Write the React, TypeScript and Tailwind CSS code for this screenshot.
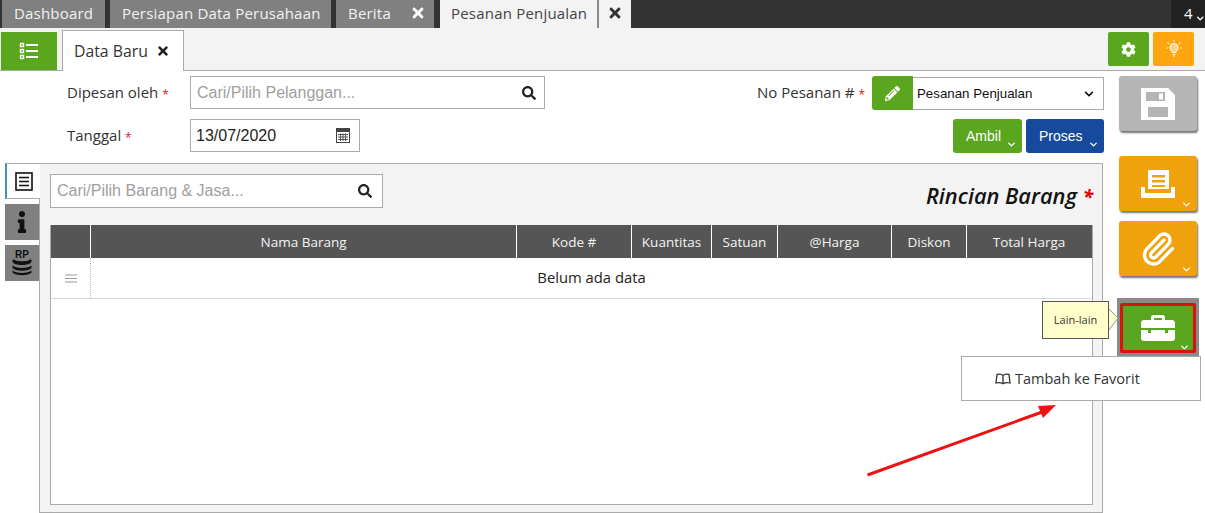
import React from "react";
import { FaTimes, FaSearch, FaCog, FaPencilAlt, FaInfo, FaChevronDown } from "react-icons/fa";
import { FiChevronDown } from "react-icons/fi";
import { Paperclip } from "lucide-react";

const ui = { fontFamily: '"Open Sans","Noto Sans",sans-serif' };
const arial = { fontFamily: '"Liberation Sans",Arial,sans-serif' };

function Chevron({ className = "" }: { className?: string }) {
  return <FiChevronDown className={className} strokeWidth={3} />;
}

function Star() {
  return <span className="align-[-1px] text-[12px] text-[#e02020]">*</span>;
}

function TopTab({ label, width, close }: { label: string; width: string; close?: boolean }) {
  return (
    <div className={`flex h-full items-center bg-[#808080] pb-[2px] text-[15px] tracking-[0.2px] text-[#f2f2f2] ${width}`}>
      <span className="pl-[12px]">{label}</span>
      {close && <FaTimes className="mr-[8px] ml-auto text-[16px] text-white" />}
    </div>
  );
}

function ListIcon() {
  return (
    <svg width="20" height="18" viewBox="0 0 20 18" fill="none" stroke="#fff">
      <rect x="1.5" y="1.5" width="3" height="3" strokeWidth="1.4" />
      <rect x="1.5" y="7.5" width="3" height="3" strokeWidth="1.4" />
      <rect x="1.5" y="13.5" width="3" height="3" strokeWidth="1.4" />
      <path d="M7 3h12M7 9h12M7 15h12" strokeWidth="2" />
    </svg>
  );
}

function CalendarIcon() {
  return (
    <svg width="14" height="15" viewBox="0 0 14 15">
      <rect x="0.5" y="0.5" width="13" height="14" fill="#fff" stroke="#444" />
      <rect x="0" y="0" width="14" height="4" fill="#444" />
      <path d="M2 6.5h10M2 9h10M2 11.5h10M4.5 5.5v7.5M7 5.5v7.5M9.5 5.5v7.5" stroke="#555" strokeWidth="1" />
    </svg>
  );
}

function BulbIcon() {
  return (
    <svg width="16" height="18" viewBox="0 0 16 18" fill="none" stroke="#fff" strokeWidth="1.2" opacity="0.9">
      <path d="M8 3.5a4 4 0 0 0-2.5 7.1c.6.5.8 1.200.8 1.900h3.400c0-.7.2-1.400.8-1.900A4 4 0 0 0 8 3.500z" fill="#ffd88a" />
      <path d="M6.500 14.300h3M7 16h2M8 0v1.800M1.500 2.500l1.300 1.300M14.500 2.500l-1.300 1.300M0 8h1.800M14.200 8H16" />
    </svg>
  );
}

function SaveIcon() {
  return (
    <svg width="34" height="32" viewBox="0 0 34 32" fill="#fff">
      <path fillRule="evenodd" d="M1 0h26l7 7v24a1 1 0 0 1-1 1H1a1 1 0 0 1-1-1V1a1 1 0 0 1 1-1zM5 4v9h19V4zM7 19v10h20V19z" />
      <rect x="18" y="5.500" width="4" height="6" />
    </svg>
  );
}

function PrintIcon() {
  return (
    <svg width="34" height="28" viewBox="0 0 34 28" fill="#fff">
      <path fillRule="evenodd" d="M7 0h21v19H7zM11 5v2.500h13V5zM11 10v2.500h13V10zM11 15v2h13v-2z" />
      <path d="M0 17h4v6h26v-6h4v11H0z" />
    </svg>
  );
}

function BriefcaseIcon() {
  return (
    <svg width="34" height="26" viewBox="0 0 34 26" fill="#fff">
      <path fillRule="evenodd" d="M10 5V2.500C10 1 11 0 12.500 0h9C23 0 24 1 24 2.500V5h7c1.700 0 3 1.300 3 3v5H0V8c0-1.700 1.300-3 3-3zM13 3v2h8V3z" />
      <path d="M0 15h7v3h3v-3h14v3h3v-3h7v8c0 1.700-1.300 3-3 3H3c-1.700 0-3-1.300-3-3z" />
    </svg>
  );
}

function BookIcon() {
  return (
    <svg width="16" height="12" viewBox="0 0 16 12" fill="none" stroke="#333" strokeWidth="1.300">
      <path d="M8 2.500C6.500 1 4 1 2 1.500L1 10c2.300-.7 5-.5 7 .8 2-1.300 4.700-1.500 7-.8L14 1.500C12 1 9.500 1 8 2.500zM8 2.500v8.300" />
    </svg>
  );
}

function ListTabIcon() {
  return (
    <svg width="18" height="19" viewBox="0 0 18 19" fill="none" stroke="#111">
      <rect x="1" y="1" width="16" height="17" strokeWidth="1.600" />
      <path d="M4 5.500h10M4 9.500h10M4 13.500h10" strokeWidth="1.600" />
    </svg>
  );
}

function CoinsIcon() {
  return (
    <div className="flex h-[27px] w-[20px] flex-col items-center">
      <span className="z-10 text-[10px] leading-[10px] font-bold text-[#111]" style={arial}>RP</span>
      <svg width="20" height="18" viewBox="0 0 20 18" fill="#111" className="-mt-[2px]">
        <path d="M1.500 1c1 3 16 3 17 0 1.500 1 1.500 3 0 4-3 2.700-14 2.700-17 0-1.500-1-1.500-3 0-4z" />
        <path d="M.5 7.500c3 3.200 16 3.200 19 0v2.500c-3 3.500-16 3.500-19 0z" />
        <path d="M.5 12.500c3 3.200 16 3.200 19 0v2c-3 3.500-16 3.500-19 0z" />
      </svg>
    </div>
  );
}

function SideButton({ color, icon, chevron = true }: { color: string; icon: React.ReactNode; chevron?: boolean }) {
  return (
    <div className={`relative flex h-[55px] w-[78px] items-center justify-center rounded-[3px] shadow-[1px_2px_2px_rgba(0,0,0,0.55)] ${color}`}>
      {icon}
      {chevron && <Chevron className="absolute right-[5px] bottom-[1px] text-[11px] text-white" />}
    </div>
  );
}

const columns: { label: string; width: string }[] = [
  { label: "Nama Barang", width: "w-[426px]" },
  { label: "Kode #", width: "w-[115px]" },
  { label: "Kuantitas", width: "w-[80px]" },
  { label: "Satuan", width: "w-[66px]" },
  { label: "@Harga", width: "w-[114px]" },
  { label: "Diskon", width: "w-[75px]" },
  { label: "Total Harga", width: "w-[125px]" },
];

export default function App() {
  return (
    <div className="relative flex h-[513px] w-[1205px] flex-col overflow-hidden bg-white text-[#222]" style={ui}>
      {/* Top tab bar */}
      <div className="flex h-[28px] shrink-0 bg-[#333333]">
        <div className="w-[2px] shrink-0" />
        <TopTab label="Dashboard" width="w-[103px]" />
        <div className="w-[5px]" />
        <TopTab label="Persiapan Data Perusahaan" width="w-[221px]" />
        <div className="w-[5px]" />
        <TopTab label="Berita" width="w-[98px]" close />
        <div className="w-[6px]" />
        <div className="flex h-full w-[157px] items-center bg-[#f3f3f3] pb-[1px] pl-[11px] text-[15px] tracking-[0.2px] text-[#444]">Pesanan Penjualan</div>
        <div className="w-[2px] bg-[#8a8a8a]" />
        <div className="flex h-full w-[32px] items-center justify-center bg-[#f3f3f3] pb-[2px]">
          <FaTimes className="text-[16px] text-[#333]" />
        </div>
        <div className="ml-auto flex h-full w-[34px] items-center bg-[#222222] pb-[2px] pl-[13px] text-[15px] text-white">
          <span>4</span>
          <Chevron className="mt-[10px] ml-[2px] text-[11px]" />
        </div>
      </div>

      {/* Secondary bar */}
      <div className="flex h-[43px] shrink-0 items-end border-b border-[#aaaaaa] bg-[#f3f3f3]">
        <div className="ml-[1px] flex h-[38px] w-[56px] items-center justify-center bg-[#5aa61e]">
          <ListIcon />
        </div>
        <div className="-mb-px ml-[5px] flex h-[41px] w-[122px] items-center border border-b-0 border-[#aaaaaa] bg-white pt-[2px] pl-[11px] text-[15.8px] text-[#333]">
          <span>Data Baru</span>
          <FaTimes className="mb-[3px] ml-[8px] text-[14px] text-[#222]" />
        </div>
        <div className="mb-[4px] ml-auto flex gap-[4px] pr-[11px]">
          <div className="flex h-[34px] w-[41px] items-center justify-center rounded-[2px] bg-[#5aa61e]">
            <FaCog className="text-[15px] text-white" />
          </div>
          <div className="flex h-[34px] w-[41px] items-center justify-center rounded-[2px] bg-[#ffa50f]">
            <BulbIcon />
          </div>
        </div>
      </div>

      {/* Body */}
      <div className="flex min-h-0 flex-1">
        <div className="flex w-[1104px] shrink-0 flex-col">
          {/* Form */}
          <div className="flex justify-between pt-[5px] pl-[67px]">
            <div className="flex flex-col gap-[10px]">
              <div className="flex h-[33px] items-center">
                <div className="w-[123px] text-[15px] text-[#333]">
                  Dipesan oleh <Star />
                </div>
                <div className="flex h-[33px] w-[355px] items-center justify-between border border-[#aaaaaa] pr-[8px] pl-[6px] text-[16px] text-[#a0a0a0]" style={arial}>
                  <span>Cari/Pilih Pelanggan...</span>
                  <FaSearch className="text-[14px] text-[#222]" />
                </div>
              </div>
              <div className="flex h-[33px] items-center">
                <div className="w-[123px] text-[15px] text-[#333]">
                  Tanggal <Star />
                </div>
                <div className="flex h-[33px] w-[170px] items-center justify-between border border-[#aaaaaa] pr-[9px] pl-[5px] text-[16px] text-[#222]" style={arial}>
                  <span>13/07/2020</span>
                  <CalendarIcon />
                </div>
              </div>
            </div>
            <div className="flex flex-col items-end gap-[9px]">
              <div className="flex h-[34px] items-center">
                <div className="mr-[7px] pb-[2px] text-[15px] text-[#333]">
                  No Pesanan # <Star />
                </div>
                <div className="flex h-[34px] w-[41px] items-center justify-center rounded-l-[3px] bg-[#5aa61e]">
                  <FaPencilAlt className="text-[15px] text-white" />
                </div>
                <div className="flex h-[33px] w-[191px] items-center justify-between border border-l-0 border-[#aaaaaa] pt-[2px] pr-[9px] pl-[4px] text-[13.3px] text-[#111]" style={arial}>
                  <span>Pesanan Penjualan</span>
                  <FaChevronDown className="text-[10px]" />
                </div>
              </div>
              <div className="flex gap-[4px]">
                <div className="relative flex h-[34px] w-[69px] items-center rounded-[3px] bg-[#5aa61e] pl-[13px] text-[14px] text-white" style={arial}>
                  Ambil
                  <Chevron className="absolute right-[5px] bottom-[3px] text-[11px]" />
                </div>
                <div className="relative flex h-[34px] w-[78px] items-center rounded-[3px] bg-[#174a9c] pl-[13px] text-[14px] text-white" style={arial}>
                  Proses
                  <Chevron className="absolute right-[5px] bottom-[3px] text-[11px]" />
                </div>
              </div>
            </div>
          </div>

          {/* Details */}
          <div className="mt-[10px] flex min-h-0 flex-1 pr-[1px] pl-[5px]">
            <div className="flex w-[34px] shrink-0 flex-col">
              <div className="z-10 -mr-px flex h-[36px] items-center justify-center border-t border-b border-l-2 border-[#aaaaaa] border-l-[#3f96a8] bg-white">
                <ListTabIcon />
              </div>
              <div className="mt-[5px] flex h-[36px] items-center justify-center bg-[#808080]">
                <FaInfo className="text-[22px] text-[#111]" />
              </div>
              <div className="mt-[5px] flex h-[36px] items-center justify-center bg-[#808080]">
                <CoinsIcon />
              </div>
            </div>
            <div className="flex min-w-0 flex-1 flex-col border border-[#aaaaaa] bg-[#f3f3f3] pt-[10px] pr-[9px] pb-[7px] pl-[10px]">
              <div className="flex h-[34px] items-start justify-between">
                <div className="flex h-[34px] w-[333px] items-center justify-between border border-[#aaaaaa] bg-white pr-[10px] pl-[6px] text-[16px] text-[#a0a0a0]" style={arial}>
                  <span>Cari/Pilih Barang & Jasa...</span>
                  <FaSearch className="text-[14px] text-[#222]" />
                </div>
                <div className="mt-[7px] text-[21.8px] leading-[30px] font-semibold text-[#111] italic">
                  Rincian Barang <span className="text-[19px] font-bold text-[#e00000]">*</span>
                </div>
              </div>
              <div className="mt-[17px] flex min-h-0 flex-1 flex-col border-r border-b border-l border-[#aaaaaa] bg-white">
                <div className="flex h-[33px] shrink-0 bg-[#555555] pt-[2px] text-[13.5px] text-[#f4f4f4]">
                  <div className="w-[39px] shrink-0" />
                  {columns.map((c) => (
                    <div key={c.label} className={`-mt-[2px] flex shrink-0 items-center justify-center border-l border-white pt-[2px] ${c.width}`}>
                      {c.label}
                    </div>
                  ))}
                </div>
                <div className="flex h-[41px] shrink-0 border-b border-[#d8d8d8]">
                  <div className="flex w-[39px] shrink-0 items-center justify-center">
                    <svg width="12" height="9" viewBox="0 0 12 9" stroke="#999" strokeWidth="1">
                      <path d="M0 1h12M0 4.500h12M0 8h12" />
                    </svg>
                  </div>
                  <div className="flex flex-1 items-center justify-center border-l border-dotted border-[#bbbbbb] pb-[1px] text-[14.8px] text-[#222]">
                    Belum ada data
                  </div>
                </div>
              </div>
            </div>
          </div>
        </div>

        {/* Right action column */}
        <div className="flex flex-col pt-[5px] pl-[15px]">
          <SideButton color="bg-[#b5b5b5]" chevron={false} icon={<SaveIcon />} />
          <div className="mt-[25px]">
            <SideButton color="bg-[#f0a20d]" icon={<PrintIcon />} />
          </div>
          <div className="mt-[10px]">
            <SideButton color="bg-[#f0a20d]" icon={<Paperclip size={36} color="#fff" strokeWidth={2.2} />} />
          </div>
          <div className="mt-[22px] -ml-[2px] h-[58px] w-[82px] bg-[#8a8a8a] px-[3px] pt-[5px]">
            <div className="relative flex h-[50px] w-[76px] items-center justify-center rounded-[2px] border-[3px] border-[#d8120c] bg-[#5aa61e]">
              <BriefcaseIcon />
              <Chevron className="absolute right-[3px] -bottom-[3px] text-[11px] text-white" />
            </div>
          </div>
        </div>
      </div>

      {/* Tooltip */}
      <div className="absolute top-[301px] left-[1042px] flex h-[38px] w-[67px] items-center justify-center border border-[#555555] bg-[#ffffcc] text-[11px] text-[#333]">
        Lain-lain
      </div>
      <svg className="absolute top-[308px] left-[1108px]" width="11" height="24" viewBox="0 0 11 24">
        <path d="M1 1l9 9-9 12" fill="#ffffcc" stroke="#999" strokeWidth="1" />
      </svg>

      {/* Dropdown menu */}
      <div className="absolute top-[356px] left-[961px] flex h-[45px] w-[240px] items-center border border-[#aaaaaa] bg-white pl-[33px] text-[14.5px] text-[#333]">
        <BookIcon />
        <span className="ml-[4px]">Tambah ke Favorit</span>
      </div>

      {/* Annotation arrow */}
      <svg className="absolute top-[400px] left-[860px]" width="205" height="80" viewBox="0 0 205 80">
        <path d="M7.500 75L185 11" stroke="#ee1111" strokeWidth="3" fill="none" />
        <path d="M196 5L178 6 183 18z" fill="#ee1111" />
      </svg>
    </div>
  );
}
